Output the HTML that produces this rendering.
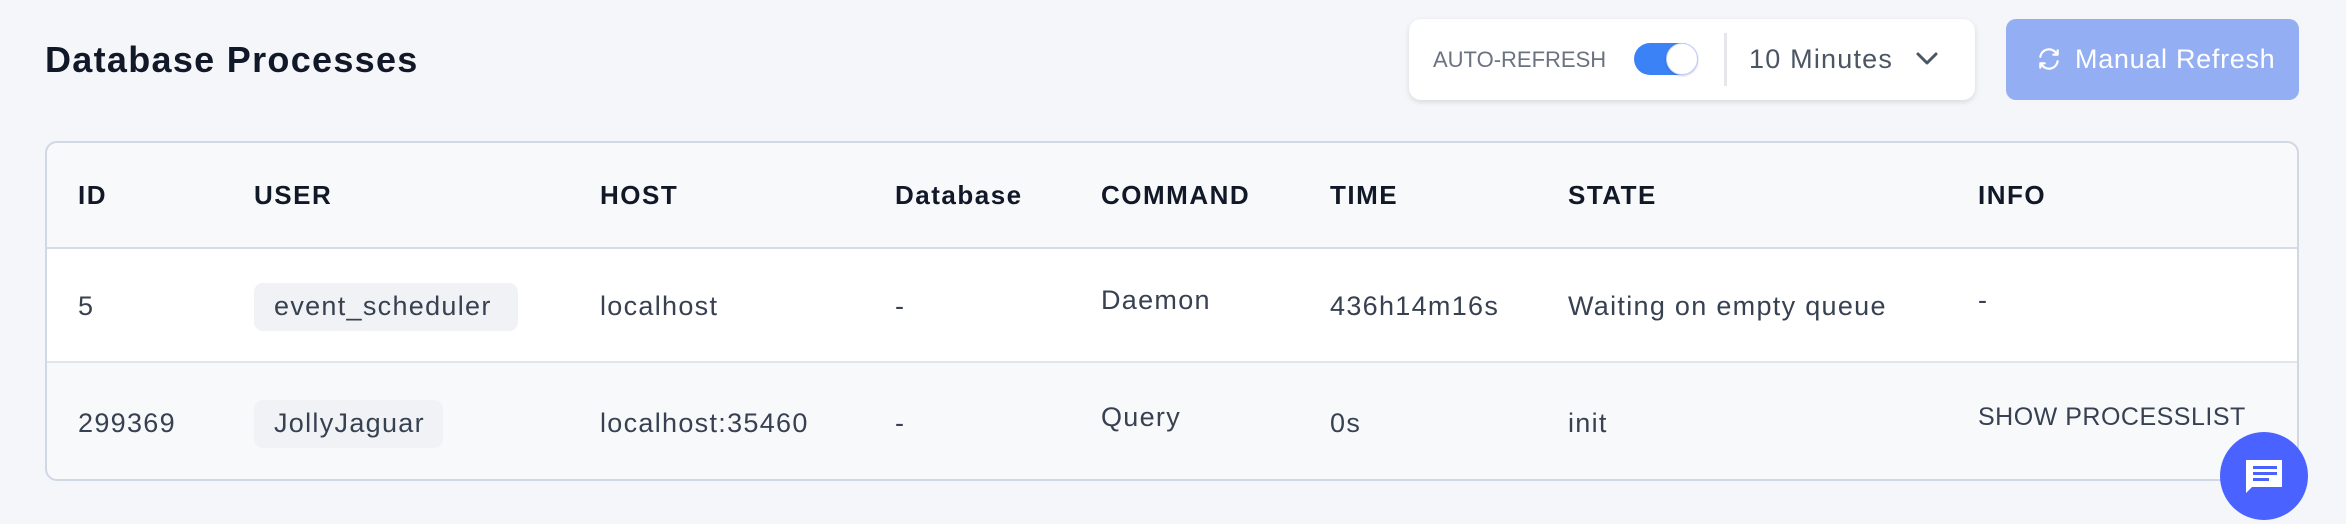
<!DOCTYPE html>
<html><head><meta charset="utf-8"><style>
*{margin:0;padding:0;box-sizing:border-box}
body{width:2346px;height:524px;background:#f5f6fa;font-family:"Liberation Sans",sans-serif;position:relative;overflow:hidden}
.abs{position:absolute}
.title{left:45px;top:38px;font-size:36px;color:#111827;line-height:44px;font-weight:bold;letter-spacing:1.3px}
.card{left:1409px;top:19px;width:566px;height:81px;background:#fff;border-radius:12px;box-shadow:0 2px 6px rgba(0,0,0,.12)}
.btn{left:2006px;top:19px;width:293px;height:81px;background:#93aef3;border-radius:10px;color:#fff;font-size:27px;line-height:81px;letter-spacing:0.7px}
.table{left:45px;top:141px;width:2254px;height:340px;border:2px solid #cfd8e3;border-radius:12px;background:#f8f9fb;overflow:hidden}
.row1{left:0;top:104px;width:100%;height:116px;background:#fff;border-top:2px solid #d5dce6;border-bottom:2px solid #e2e6ec}
.h{font-size:26px;font-weight:bold;color:#111827;line-height:30px;letter-spacing:1.5px}
.c{font-size:27px;color:#374151;line-height:30px;letter-spacing:1.3px}
.pill{background:#f1f2f5;border-radius:9px;height:48px}
</style></head><body>
<div class="abs title">Database Processes</div>
<div class="abs card">
 <div class="abs" style="left:24px;top:28px;font-size:22px;color:#6b7280;line-height:26px">AUTO-REFRESH</div>
 <div class="abs" style="left:225px;top:24px;width:64px;height:32px;background:#3b82f6;border-radius:16px"></div>
 <div class="abs" style="left:257px;top:24px;width:32px;height:32px;background:#fff;border-radius:50%;border:1px solid #c7d2fe;box-shadow:0 1px 2px rgba(0,0,0,.2)"></div>
 <div class="abs" style="left:315px;top:14px;width:3px;height:53px;background:#e5e7eb"></div>
 <div class="abs" style="left:340px;top:24px;font-size:27px;color:#4b5563;line-height:32px;letter-spacing:1.2px">10 Minutes</div>
 <svg class="abs" style="left:506px;top:30px" width="24" height="20" viewBox="0 0 24 20"><path d="M3 5l9 9 9-9" fill="none" stroke="#4b5563" stroke-width="3" stroke-linecap="round" stroke-linejoin="round"/></svg>
</div>
<div class="abs btn">
 <svg class="abs" style="left:30px;top:27px" width="26" height="26" viewBox="0 0 24 24" fill="none" stroke="#fff" stroke-width="2" stroke-linecap="round" stroke-linejoin="round"><path d="M4 10a8 8 0 0 1 14.5-3.5M20 4v4h-4M20 14a8 8 0 0 1-14.5 3.5M4 20v-4h4"/></svg>
 <span class="abs" style="left:69px;top:0">Manual Refresh</span>
</div>
<div class="abs table">
 <div class="abs row1"></div>
 <div class="abs h" style="left:31px;top:37px">ID</div>
 <div class="abs h" style="left:207px;top:37px">USER</div>
 <div class="abs h" style="left:553px;top:37px">HOST</div>
 <div class="abs h" style="left:848px;top:37px">Database</div>
 <div class="abs h" style="left:1054px;top:37px">COMMAND</div>
 <div class="abs h" style="left:1283px;top:37px">TIME</div>
 <div class="abs h" style="left:1521px;top:37px">STATE</div>
 <div class="abs h" style="left:1931px;top:37px">INFO</div>

 <div class="abs pill" style="left:207px;top:140px;width:264px"></div>
 <div class="abs c" style="left:31px;top:148px">5</div>
 <div class="abs c" style="left:227px;top:148px">event_scheduler</div>
 <div class="abs c" style="left:553px;top:148px">localhost</div>
 <div class="abs c" style="left:848px;top:148px">-</div>
 <div class="abs c" style="left:1054px;top:142px">Daemon</div>
 <div class="abs c" style="left:1283px;top:148px">436h14m16s</div>
 <div class="abs c" style="left:1521px;top:148px">Waiting on empty queue</div>
 <div class="abs c" style="left:1931px;top:142px">-</div>

 <div class="abs pill" style="left:207px;top:257px;width:189px"></div>
 <div class="abs c" style="left:31px;top:265px">299369</div>
 <div class="abs c" style="left:227px;top:265px">JollyJaguar</div>
 <div class="abs c" style="left:553px;top:265px">localhost:35460</div>
 <div class="abs c" style="left:848px;top:265px">-</div>
 <div class="abs c" style="left:1054px;top:259px">Query</div>
 <div class="abs c" style="left:1283px;top:265px">0s</div>
 <div class="abs c" style="left:1521px;top:265px">init</div>
 <div class="abs c" style="left:1931px;top:259px;font-size:25px;letter-spacing:0.5px">SHOW PROCESSLIST</div>
</div>
<div class="abs" style="left:2220px;top:432px;width:88px;height:88px;border-radius:50%;background:#4a62ff"></div>
<svg class="abs" style="left:2244px;top:456px" width="42" height="42" viewBox="0 0 42 42"><path d="M2 4h36v27H8l-6 6z" fill="#fff"/><rect x="9" y="10" width="24" height="3" fill="#4a62ff"/><rect x="9" y="16" width="24" height="3" fill="#4a62ff"/><rect x="9" y="22" width="16" height="3" fill="#4a62ff"/></svg>
</body></html>
